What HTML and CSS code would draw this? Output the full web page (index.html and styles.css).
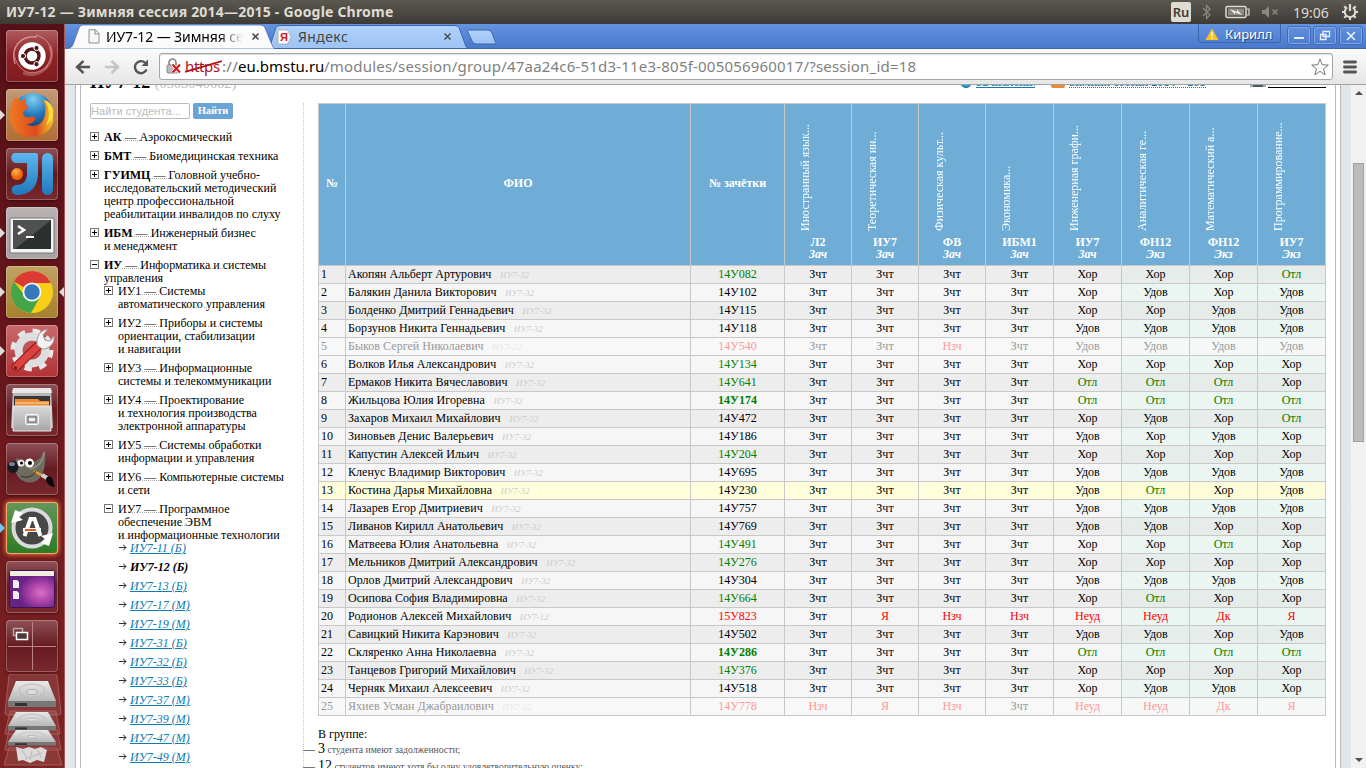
FILE: index.html
```html
<!DOCTYPE html>
<html lang="ru">
<head>
<meta charset="utf-8">
<title>ИУ7-12 — Зимняя сессия 2014—2015</title>
<link rel="stylesheet" href="styles.css">
</head>
<body>
<header class="panel">
  <span class="panel-title">ИУ7-12 — Зимняя сессия 2014—2015 - Google Chrome</span>
  <div class="indicators">
    <span class="lang">Ru</span>
    <svg class="i-bt" width="10" height="16" viewBox="0 0 10 16"><path d="M1 4l7 7-3.500 3.500v-13L8 5l-7 7" fill="none" stroke="#8b8880" stroke-width="1.200"/></svg>
    <svg class="i-bat" width="25" height="14" viewBox="0 0 25 14"><rect x="1" y="1.500" width="20" height="11" rx="1.500" fill="none" stroke="#dfdbd2" stroke-width="1.500"/><rect x="3" y="3.500" width="16" height="7" fill="#8d8a83"/><path d="M22 4h2v6h-2" fill="none" stroke="#dfdbd2" stroke-width="1.200"/><path d="M5 4l7 3v-2.500l5 5.500-7-2.500v2z" fill="#f2efe8"/></svg>
    <svg class="i-snd" width="18" height="14" viewBox="0 0 18 14"><path d="M1 5h3l4-4v12L4 9H1z" fill="#8b8880"/><path d="M11.500 4.500l5 5m0-5l-5 5" stroke="#8b8880" stroke-width="1.500"/></svg>
    <span class="clock">19:06</span>
    <svg class="i-gear" width="18" height="18" viewBox="0 0 18 18"><g stroke="#dfdbd2" stroke-width="2.200"><path d="M9 1v7M1 9h3M14 9h3M9 14v3M3.300 3.300l2.200 2.200M12.500 12.500l2.200 2.200M14.700 3.300l-2.200 2.200M5.500 12.500l-2.200 2.200"/></g><path d="M6.200 4.500a5.200 5.200 0 1 0 5.600 0" fill="none" stroke="#dfdbd2" stroke-width="2"/></svg>
  </div>
</header>
<div class="desktop">
<nav class="launcher">
  <div class="tile t-dash"><svg viewBox="0 0 52 52"><g fill="none" stroke="#f1c6c2" opacity=".6"><path d="M9 34C4 18 14 5 31 7" stroke-width="1.500"/><path d="M44 16C50 34 35 49 17 43" stroke-width="3" opacity=".5"/><path d="M30 5c18 5 20 24 8 34M8 24c4 20 20 24 34 12"/></g><circle cx="26" cy="26" r="13.700" fill="#fff"/><circle cx="26" cy="26" r="7" fill="none" stroke="#571319" stroke-width="3.400"/><g fill="#571319" stroke="#fff"><circle cx="17" cy="26" r="2.600"/><circle cx="30.500" cy="18" r="2.600"/><circle cx="30.500" cy="34.200" r="2.600"/></g></svg></div>
  <div class="tile t-ff run"><svg viewBox="0 0 52 52"><defs><radialGradient id="ffb" cx=".5" cy=".15" r=".8"><stop offset="0" stop-color="#7fd0f2"/><stop offset=".5" stop-color="#2579bd"/><stop offset="1" stop-color="#15305f"/></radialGradient><linearGradient id="ffo" x1="0" x2="1"><stop offset="0" stop-color="#ef7a22"/><stop offset=".6" stop-color="#dc4a1d"/><stop offset="1" stop-color="#f7c52c"/></linearGradient></defs><circle cx="27" cy="24" r="20" fill="url(#ffb)"/><path d="M7 12l3-4 5 4 5-3-1 6c3 1 4 3 2 5l-4 3c0 4 3 6 7 5 4-1 7 0 5 3-2 4-7 4-9 4 6 4 15 2 18-6 3-8 1-15-2-19 7 4 13 14 11 23-2 8-10 15-21 15C13 48 4 40 4 28c0-7 1-12 3-16z" fill="url(#ffo)"/><path d="M38 11c5 6 7 16 2 25 6-3 8-9 7-16-2-6-5-8-9-9z" fill="#fbdc3b"/></svg></div>
  <div class="tile t-dark"><svg viewBox="0 0 52 52"><defs><linearGradient id="ji" x1="0" y1="0" x2="0" y2="1"><stop offset="0" stop-color="#5cb8ee"/><stop offset="1" stop-color="#2077bd"/></linearGradient><radialGradient id="jo" cx=".4" cy=".3"><stop offset="0" stop-color="#ffb652"/><stop offset="1" stop-color="#ec6608"/></radialGradient></defs><path d="M8 5h22q2 0 2 3v17c0 13-7 22-21 22-7 0-7-9-1-10 8 0 11-4 11-12V15H11C4 15 4 7 8 5z" fill="url(#ji)"/><rect x="36" y="5" width="11" height="42" rx="5.500" fill="url(#ji)"/><circle cx="11" cy="26" r="6" fill="url(#jo)"/></svg></div>
  <div class="tile t-grey run"><svg viewBox="0 0 52 52"><path d="M4 11h44v35H4z" fill="#f4f4f4" stroke="#777"/><path d="M7 13h38v29H7z" fill="#2d2f2f"/><path d="M7 13h38L9 42H7z" fill="#4e5150"/><path d="M12 19l6 4-6 4" fill="none" stroke="#fff" stroke-width="2.500"/><path d="M20 30h8" stroke="#fff" stroke-width="2"/></svg></div>
  <div class="tile t-gold run active"><svg viewBox="0 0 52 52"><circle cx="26" cy="26" r="21" fill="#f8cf16"/><path d="M26 26L7.800 15.500A21 21 0 0 1 45 17H26z" fill="#dc3b35"/><path d="M7.800 15.500A21 21 0 0 0 25 47l9-16-8-5-7 4z" fill="#45a549"/><circle cx="26" cy="26" r="9.500" fill="#f5f5f5"/><circle cx="26" cy="26" r="7.700" fill="#3579bb"/></svg></div>
  <div class="tile t-red run"><svg viewBox="0 0 52 52"><circle cx="26" cy="25" r="18.500" fill="none" stroke="#e7e7e7" stroke-width="6" stroke-dasharray="7.200 7.330"/><circle cx="26" cy="25" r="13.500" fill="none" stroke="#dedede" stroke-width="8"/><path d="M10 42L36 17" stroke="#8e1717" stroke-width="9" stroke-linecap="round"/><path d="M10 42L31 22" stroke="#de4240" stroke-width="7" stroke-linecap="round"/><path d="M31 20c-1-8 3-15 11-16l-5 6 2 5 5 1 4-5c1 8-5 13-12 13z" fill="#f3f3f3" stroke="#999"/><circle cx="9.500" cy="43" r="1.700" fill="#721414"/></svg></div>
  <div class="tile t-dark"><svg viewBox="0 0 52 52"><defs><linearGradient id="fm" x1="0" y1="0" x2="0" y2="1"><stop offset="0" stop-color="#d9d9d9"/><stop offset="1" stop-color="#a6a6a6"/></linearGradient></defs><path d="M7 4h38l2 40H5z" fill="#b7b7b7"/><path d="M7 4h38l1 5H6z" fill="#e8e8e8"/><path d="M8 12h36v13H8z" fill="#373737"/><path d="M9 15h23l2 2h9v8H9z" fill="#eb8936"/><path d="M9 19h34" stroke="#fbe0a4"/><path d="M7 22h38v25H7z" fill="url(#fm)" stroke="#e8e8e8"/><rect x="19.500" y="30.500" width="13" height="10" rx="1.500" fill="#c8c8c8" stroke="#f8f8f8"/><rect x="22" y="33" width="8" height="5" fill="#eee" stroke="#555"/></svg></div>
  <div class="tile t-dark"><svg viewBox="0 0 52 52"><path d="M39 7c1 16-1 26-9 31-7 4-17 0-20-8-1-6-1-10 1-16 2 3 4 5 8 6 8 1 17-4 20-13z" fill="#6f6b61"/><path d="M38 9c0 8-6 16-14 17" fill="none" stroke="#908b7e" stroke-width="2"/><ellipse cx="7" cy="24" rx="5.500" ry="6" fill="#171a1f"/><ellipse cx="6" cy="21" rx="3" ry="2" fill="#778493"/><circle cx="15" cy="20" r="3.500" fill="#eee"/><circle cx="23.500" cy="20" r="4.500" fill="#fff"/><circle cx="15.500" cy="20" r="1.500"/><circle cx="24" cy="20" r="2"/><path d="M28 28l11 6" stroke="#ec9b2c" stroke-width="2.500"/><path d="M36 32l5 3" stroke="#c9d2d8" stroke-width="4"/><path d="M40 36c1-3 4-3 6-1 2 3 1 6 3 9-5 0-9-4-9-8z" fill="#0b0b0b"/><path d="M15 33c7 3 12 0 15-5" fill="none" stroke="#2e2b27"/></svg></div>
  <div class="tile t-green run-blue"><svg viewBox="0 0 52 52"><circle cx="26" cy="26" r="18.500" fill="#474747" stroke="#dadada" stroke-width="4"/><path d="M9 8L5 21l12-3-4-3 4-4zM43 44l4-13-12 3 4 3-4 4z" fill="#fff"/><path d="M18.500 34l6-17h4l6 17" fill="none" stroke="#fff" stroke-width="4"/><path d="M17 28h18" stroke="#fff" stroke-width="4"/><path d="M19 28h11" stroke="#ed5b21" stroke-width="2"/></svg></div>
  <div class="tile t-dark"><svg viewBox="0 0 52 52"><defs><radialGradient id="dp" cx=".7" cy=".6"><stop offset="0" stop-color="#dc6fc5"/><stop offset=".6" stop-color="#a03ca2"/><stop offset="1" stop-color="#682386"/></radialGradient></defs><rect x="3.500" y="9.500" width="45" height="37" rx="2" fill="url(#dp)" stroke="#3f1254"/><path d="M4 10h44v5H4z" fill="#f1eedd"/><path d="M7 19h4l2 2v6H7zM7 30h4l2 2v6H7z" fill="#eee"/></svg></div>
  <div class="tile t-dark"><svg viewBox="0 0 52 52"><path d="M26.500 2v48M2 26.500h48" stroke="#bb8585"/><path d="M7.500 8.500h9v7h-9z" fill="none" stroke="#aaa" stroke-width="1.500"/><path d="M10.500 12.500h11v7h-11z" fill="#4a3b3b" stroke="#fff" stroke-width="1.500"/></svg></div>
  <svg class="stack" width="60" height="94" viewBox="0 0 60 94">
    <defs><linearGradient id="hd" x1="0" y1="0" x2="0" y2="1"><stop offset="0" stop-color="#e9e9e9"/><stop offset="1" stop-color="#b7b7b7"/></linearGradient>
    <g id="drive"><path d="M12 0h32l8 20H4z" fill="url(#hd)"/><path d="M4 20h48v6H4z" fill="#777"/><path d="M11 22h12v3H11z" fill="#333"/><ellipse cx="28" cy="10" rx="13" ry="7" fill="none" stroke="#bbb"/><ellipse cx="28" cy="11" rx="5" ry="2.500" fill="#ddd" stroke="#999" stroke-width=".6"/></g></defs>
    <g fill="#fff" fill-opacity=".1" stroke="#a55b5b"><path d="M5 2q0-2 2-2h44q2 0 2 2l4 37q0 2-3 2H3q-2 0-2-2z"/><path d="M6 37h46l4 23H1zM5 56h48l4 20H1zM5 74h48l5 17H0z"/></g>
    <use href="#drive" x="0" y="7"/><use href="#drive" transform="translate(0 38) scale(1 .7)"/><use href="#drive" transform="translate(0 56) scale(1 .6)"/>
    <path d="M12 73l7 2 6-2 6 2 6-2 6 3-3 12-7-2-7 3-7-3-5 1z" fill="#dadada"/><path d="M18 76l5 8m5-7l-2 9m8-10l3 8m-16 1l17-6" stroke="#bbb" fill="none"/>
  </svg>
</nav>
<main class="browser">
  <div class="tabstrip">
    <svg class="tab-shapes" width="450" height="25" viewBox="0 0 450 25"><defs><linearGradient id="t2" x1="0" y1="0" x2="0" y2="1"><stop offset="0" stop-color="#b0d1fa"/><stop offset="1" stop-color="#9dc3f3"/></linearGradient></defs>
      <path d="M0 24.500H450" stroke="#3d66ad"/>
      <path d="M202 24.500c4-1 4-7 7-15l2-6q1-2 4-2H390q3 0 4 2l7 19q1 2 4 2z" fill="url(#t2)" stroke="#3d66ad"/>
      <path d="M403 6q-1 0 0 2l4 9q1 3 4 3h18q3 0 1-3l-3-8q-1-3-4-3z" fill="url(#t2)" stroke="#3d66ad"/>
      <path d="M0 25c7-1 7-2 9-7l5-14q1-3 4-3H195q4 0 5 3l7 17q1 3 3 4z" fill="#fbfbfb" stroke="#3d66ad" stroke-width=".7"/></svg>
    <div class="tab tab-on"><svg width="12" height="15" viewBox="0 0 12 15"><path d="M1 .7h6.500L11 4.500V14H1z" fill="#f7f7f7" stroke="#8e8e8e"/><path d="M7 .7V5h4" fill="none" stroke="#8e8e8e"/></svg><span class="tab-title">ИУ7-12 — Зимняя се</span><svg class="x" width="9" height="9" viewBox="0 0 9 9"><path d="M1.500 1.500l6 6m0-6l-6 6" stroke="#505050" stroke-width="1.600"/></svg></div>
    <div class="tab tab-off"><svg width="16" height="16" viewBox="0 0 16 16"><path d="M1 1h9.500L14 8l-3.500 7H1z" fill="#fff" stroke="#a2a2a2" stroke-width=".7"/><text x="3" y="12" class="ya">Я</text></svg><span class="tab-title">Яндекс</span><svg class="x" width="9" height="9" viewBox="0 0 9 9"><path d="M1.500 1.500l6 6m0-6l-6 6" stroke="#505050" stroke-width="1.600"/></svg></div>
    <div class="user"><svg width="14" height="13" viewBox="0 0 14 13"><path d="M7 .5L13.500 12H.5z" fill="#fbc11c"/><path d="M7 4v4.500M7 9.500v1.500" stroke="#fff" stroke-width="1.500"/></svg>Кирилл</div>
    <div class="winbtns">
      <span><svg width="12" height="12" viewBox="0 0 12 12"><path d="M1 8h10" stroke="#e8f0ff" stroke-width="2"/></svg></span>
      <span><svg width="12" height="12" viewBox="0 0 12 12"><path d="M4 1.500h6.500v5H4zM1.500 4.500h5.500v5H1.500z" fill="none" stroke="#e8f0ff" stroke-width="1.300"/></svg></span>
      <span><svg width="12" height="12" viewBox="0 0 12 12"><path d="M2 2l8 8m0-8l-8 8" stroke="#e8f0ff" stroke-width="1.700"/></svg></span>
    </div>
  </div>
  <div class="toolbar">
    <svg width="16" height="16" viewBox="0 0 16 16"><path d="M15 8H2.500M8.500 2L2 8l6.500 6" fill="none" stroke="#555" stroke-width="2.400"/></svg>
    <svg width="16" height="16" viewBox="0 0 16 16"><path d="M1 8h12.500M7.500 2L14 8l-6.500 6" fill="none" stroke="#c4c4c4" stroke-width="2.400"/></svg>
    <svg width="16" height="16" viewBox="0 0 16 16"><path d="M13.500 10.500A6 6 0 1 1 12 3.700" fill="none" stroke="#555" stroke-width="2.400"/><path d="M15 .5V7H8.500z" fill="#555"/></svg>
    <div class="omnibox">
      <svg width="15" height="17" viewBox="0 0 15 17"><path d="M3 8V4.500a3.500 3.500 0 0 1 7 0V8" fill="none" stroke="#888" stroke-width="1.700"/><rect x="1" y="7" width="11" height="8" rx="1" fill="#bdbdbd" stroke="#888"/><path d="M6.500 6.500l7.500 8m0-8l-7.500 8" stroke="#fff" stroke-width="3.400"/><path d="M6.500 6.500l7.500 8m0-8l-7.500 8" stroke="#d01818" stroke-width="2"/></svg>
      <span class="https">https<svg width="37" height="14" viewBox="0 0 37 14"><path d="M0 12L37 1" stroke="#b01116" stroke-width="1.700"/></svg></span><span class="sep">://</span><span class="host">eu.bmstu.ru</span><span class="path">/modules/session/group/47aa24c6-51d3-11e3-805f-005056960017/?session_id=18</span>
      <svg class="star" width="18" height="18" viewBox="0 0 18 18"><path d="M9 1l2.200 5.800 6.100.2-4.800 3.800 1.700 6L9 13.300l-5.200 3.500 1.700-6L.7 7l6.100-.2z" fill="#fff" stroke="#777" stroke-linejoin="round"/></svg>
    </div>
    <svg class="menu" width="14" height="14" viewBox="0 0 14 14"><path d="M1.500 2h11M1.500 7h11M1.500 12h11" stroke="#555" stroke-width="2.900" stroke-linecap="round"/></svg>
  </div>
  <div class="viewport">
    <div class="sheet"><div class="sheet-in">
      <div class="page-head">
        <h1>ИУ7-12 <span>(0503040062)</span></h1>
        <div class="tools">
          <a class="k1" href="#"><svg width="12" height="12" viewBox="0 0 12 12"><circle cx="6" cy="6" r="5.500" fill="#2d9bd0" stroke="#1b6f9c"/></svg><b>Зачисление</b></a>
          <a class="k2" href="#"><svg width="14" height="12" viewBox="0 0 14 12"><rect width="14" height="12" rx="2" fill="#ee8a2d"/></svg><b>Зимняя сессия 2014—2015</b></a>
          <a class="k3" href="#"><svg width="16" height="12" viewBox="0 0 16 12"><rect y="2" width="16" height="9" fill="#aaa"/><path d="M3 8h10v3H3z" fill="#4a5a60"/></svg><b>Печать</b></a>
        </div>
      </div>
      <div class="cols">
        <aside class="side">
          <div class="search"><span class="field">Найти студента...</span><span class="btn">Найти</span></div>
          <ul class="tree">
            <li><b>АК</b><u> — Аэрокосмический</u></li>
            <li><b>БМТ</b><u> — Биомедицинская техника</u></li>
            <li><b>ГУИМЦ</b><u> — Головной учебно-<br>исследовательский методический<br>центр профессиональной<br>реабилитации инвалидов по слуху</u></li>
            <li><b>ИБМ</b><u> — Инженерный бизнес<br>и менеджмент</u></li>
            <li class="open"><b>ИУ</b><u> — Информатика и системы<br>управления</u>
              <ul>
                <li><u>ИУ1 — Системы<br>автоматического управления</u></li>
                <li><u>ИУ2 — Приборы и системы<br>ориентации, стабилизации<br>и навигации</u></li>
                <li><u>ИУ3 — Информационные<br>системы и телекоммуникации</u></li>
                <li><u>ИУ4 — Проектирование<br>и технология производства<br>электронной аппаратуры</u></li>
                <li><u>ИУ5 — Системы обработки<br>информации и управления</u></li>
                <li><u>ИУ6 — Компьютерные системы<br>и сети</u></li>
                <li class="open"><u>ИУ7 — Программное<br>обеспечение ЭВМ<br>и информационные технологии</u>
                  <ol class="groups">
                    <li><a href="#">ИУ7-11 (Б)</a></li>
                    <li><strong>ИУ7-12 (Б)</strong></li>
                    <li><a href="#">ИУ7-13 (Б)</a></li>
                    <li><a href="#">ИУ7-17 (М)</a></li>
                    <li><a href="#">ИУ7-19 (М)</a></li>
                    <li><a href="#">ИУ7-31 (Б)</a></li>
                    <li><a href="#">ИУ7-32 (Б)</a></li>
                    <li><a href="#">ИУ7-33 (Б)</a></li>
                    <li><a href="#">ИУ7-37 (М)</a></li>
                    <li><a href="#">ИУ7-39 (М)</a></li>
                    <li><a href="#">ИУ7-47 (М)</a></li>
                    <li><a href="#">ИУ7-49 (М)</a></li>
                  </ol>
                </li>
              </ul>
            </li>
          </ul>
        </aside>
        <section class="content">
          <table class="marks">
            <colgroup><col class="c-n"><col class="c-fio"><col class="c-id"><col class="c-z"><col class="c-z"><col class="c-z"><col class="c-e"><col class="c-e"><col class="c-e"><col class="c-e"><col class="c-e"></colgroup>
            <thead><tr><th>№</th><th>ФИО</th><th>№ зачётки</th>
              <th class="subj"><span>Иностранный язык...</span>Л2<i>Зач</i></th>
              <th class="subj"><span>Теоретическая ин...</span>ИУ7<i>Зач</i></th>
              <th class="subj"><span>Физическая культ...</span>ФВ<i>Зач</i></th>
              <th class="subj"><span>Экономика...</span>ИБМ1<i>Зач</i></th>
              <th class="subj"><span>Инженерная графи...</span>ИУ7<i>Зач</i></th>
              <th class="subj"><span>Аналитическая ге...</span>ФН12<i>Экз</i></th>
              <th class="subj"><span>Математический а...</span>ФН12<i>Экз</i></th>
              <th class="subj"><span>Программирование...</span>ИУ7<i>Экз</i></th></tr></thead>
            <tbody>
<tr><td>1<td>Акопян Альберт Артурович<i>ИУ7-32</i><td class="g">14У082<td>Зчт<td>Зчт<td>Зчт<td>Зчт<td>Хор<td>Хор<td>Хор<td class="g">Отл</tr>
<tr><td>2<td>Балякин Данила Викторович<i>ИУ7-32</i><td>14У102<td>Зчт<td>Зчт<td>Зчт<td>Зчт<td>Хор<td>Удов<td>Хор<td>Удов</tr>
<tr><td>3<td>Болденко Дмитрий Геннадьевич<i>ИУ7-32</i><td>14У115<td>Зчт<td>Зчт<td>Зчт<td>Зчт<td>Хор<td>Хор<td>Удов<td>Удов</tr>
<tr><td>4<td>Борзунов Никита Геннадьевич<i>ИУ7-32</i><td>14У118<td>Зчт<td>Зчт<td>Зчт<td>Зчт<td>Удов<td>Удов<td>Удов<td>Удов</tr>
<tr class="out"><td>5<td>Быков Сергей Николаевич<i>ИУ7-22</i><td class="r">14У540<td>Зчт<td>Зчт<td class="r">Нзч<td>Зчт<td>Удов<td>Удов<td>Удов<td>Удов</tr>
<tr><td>6<td>Волков Илья Александрович<i>ИУ7-32</i><td class="g">14У134<td>Зчт<td>Зчт<td>Зчт<td>Зчт<td>Хор<td>Хор<td>Хор<td>Хор</tr>
<tr><td>7<td>Ермаков Никита Вячеславович<i>ИУ7-32</i><td class="g">14У641<td>Зчт<td>Зчт<td>Зчт<td>Зчт<td class="g">Отл<td class="g">Отл<td class="g">Отл<td>Хор</tr>
<tr><td>8<td>Жильцова Юлия Игоревна<i>ИУ7-32</i><td class="g top">14У174<td>Зчт<td>Зчт<td>Зчт<td>Зчт<td class="g">Отл<td class="g">Отл<td class="g">Отл<td class="g">Отл</tr>
<tr><td>9<td>Захаров Михаил Михайлович<i>ИУ7-32</i><td>14У472<td>Зчт<td>Зчт<td>Зчт<td>Зчт<td>Хор<td>Удов<td>Хор<td class="g">Отл</tr>
<tr><td>10<td>Зиновьев Денис Валерьевич<i>ИУ7-32</i><td>14У186<td>Зчт<td>Зчт<td>Зчт<td>Зчт<td>Удов<td>Хор<td>Удов<td>Хор</tr>
<tr><td>11<td>Капустин Алексей Ильич<i>ИУ7-32</i><td class="g">14У204<td>Зчт<td>Зчт<td>Зчт<td>Зчт<td>Хор<td>Хор<td>Хор<td>Хор</tr>
<tr><td>12<td>Кленус Владимир Викторович<i>ИУ7-32</i><td>14У695<td>Зчт<td>Зчт<td>Зчт<td>Зчт<td>Удов<td>Удов<td>Удов<td>Удов</tr>
<tr class="hover"><td>13<td>Костина Дарья Михайловна<i>ИУ7-32</i><td>14У230<td>Зчт<td>Зчт<td>Зчт<td>Зчт<td>Удов<td class="g">Отл<td>Хор<td>Удов</tr>
<tr><td>14<td>Лазарев Егор Дмитриевич<i>ИУ7-32</i><td>14У757<td>Зчт<td>Зчт<td>Зчт<td>Зчт<td>Удов<td>Удов<td>Удов<td>Удов</tr>
<tr><td>15<td>Ливанов Кирилл Анатольевич<i>ИУ7-32</i><td>14У769<td>Зчт<td>Зчт<td>Зчт<td>Зчт<td>Удов<td>Удов<td>Хор<td>Хор</tr>
<tr><td>16<td>Матвеева Юлия Анатольевна<i>ИУ7-32</i><td class="g">14У491<td>Зчт<td>Зчт<td>Зчт<td>Зчт<td>Хор<td>Хор<td class="g">Отл<td>Хор</tr>
<tr><td>17<td>Мельников Дмитрий Александрович<i>ИУ7-32</i><td class="g">14У276<td>Зчт<td>Зчт<td>Зчт<td>Зчт<td>Хор<td>Хор<td>Хор<td>Хор</tr>
<tr><td>18<td>Орлов Дмитрий Александрович<i>ИУ7-32</i><td>14У304<td>Зчт<td>Зчт<td>Зчт<td>Зчт<td>Удов<td>Удов<td>Удов<td>Удов</tr>
<tr><td>19<td>Осипова София Владимировна<i>ИУ7-32</i><td class="g">14У664<td>Зчт<td>Зчт<td>Зчт<td>Зчт<td>Хор<td class="g">Отл<td>Хор<td>Хор</tr>
<tr><td>20<td>Родионов Алексей Михайлович<i>ИУ7-12</i><td class="r">15У823<td>Зчт<td class="r">Я<td class="r">Нзч<td class="r">Нзч<td class="r">Неуд<td class="r">Неуд<td class="r">Дк<td class="r">Я</tr>
<tr><td>21<td>Савицкий Никита Карэнович<i>ИУ7-32</i><td>14У502<td>Зчт<td>Зчт<td>Зчт<td>Зчт<td>Удов<td>Удов<td>Хор<td>Удов</tr>
<tr><td>22<td>Скляренко Анна Николаевна<i>ИУ7-32</i><td class="g top">14У286<td>Зчт<td>Зчт<td>Зчт<td>Зчт<td class="g">Отл<td class="g">Отл<td class="g">Отл<td class="g">Отл</tr>
<tr><td>23<td>Танцевов Григорий Михайлович<i>ИУ7-32</i><td class="g">14У376<td>Зчт<td>Зчт<td>Зчт<td>Зчт<td>Хор<td>Хор<td>Хор<td>Хор</tr>
<tr><td>24<td>Черняк Михаил Алексеевич<i>ИУ7-32</i><td>14У518<td>Зчт<td>Зчт<td>Зчт<td>Зчт<td>Хор<td>Удов<td>Удов<td>Хор</tr>
<tr class="out"><td>25<td>Яхиев Усман Джабраилович<i>ИУ7-22</i><td class="r">14У778<td class="r">Нзч<td class="r">Я<td class="r">Нзч<td>Зчт<td class="r">Неуд<td class="r">Неуд<td class="r">Дк<td class="r">Я</tr>
            </tbody>
          </table>
          <p class="sum">В группе:</p>
          <ul class="stats"><li><b>3</b> студента имеют задолженности;</li><li><b>12</b> студентов имеют хотя бы одну удовлетворительную оценку;</li></ul>
        </section>
      </div>
    </div></div>
    <div class="scroll"><i class="up"></i><span class="thumb"></span><i class="down"></i></div>
  </div>
</main>
</div>
</body>
</html>
```
FILE: styles.css
```css
*, *::before, *::after { box-sizing: border-box; }
html, body { height: 100%; }
body { margin: 0; height: 768px; overflow: hidden; display: flex; flex-direction: column; font: 12px/13px "Liberation Serif", serif; color: #000; }
svg { display: block; flex: none; }
ul, ol { list-style: none; margin: 0; padding: 0; }

.panel { flex: none; height: 24px; display: flex; justify-content: space-between; align-items: center; padding: 0 7px 0 6px; background: linear-gradient(#5b5850, #3d3b37); color: #dfdbd2; font-family: "Noto Sans", "Open Sans", sans-serif; }
.panel-title { font-size: 14px; line-height: 20px; margin-top: -1px; font-weight: 700; letter-spacing: .2px; white-space: nowrap; }
.indicators { display: flex; align-items: center; }
.lang { width: 20px; height: 20px; border-radius: 2px; background: #dfdbd2; color: #3d3b37; font-size: 13px; line-height: 20px; font-weight: 600; text-align: center; margin-right: 11px; }
.i-bt { margin-right: 13px; }
.i-bat { margin-right: 11px; }
.i-snd { margin-right: 14px; }
.clock { width: 36px; font-size: 14px; margin-right: 12px; white-space: nowrap; }

.desktop { flex: 1; min-height: 0; display: flex; }
.launcher { flex: none; width: 65px; padding: 6px 0 0 6px; display: flex; flex-direction: column; gap: 7px; overflow: hidden; background: linear-gradient(#561017, #6a171c 50%, #7e2322); border-right: 1px solid #a85a55; }
.tile { position: relative; flex: none; width: 52px; height: 52px; border-radius: 4px; box-shadow: inset 0 0 0 1px rgba(255,255,255,.25), 0 1px 3px rgba(0,0,0,.4); }
.tile svg { width: 52px; height: 52px; }
.t-dash { background: linear-gradient(#ad5b5d, #8f2226 50%, #7f1c20); }
.t-ff { background: linear-gradient(#c39a78, #b06d33); }
.t-dark { background: linear-gradient(#8e5156, #651a20 50%, #78292d); }
.t-grey { background: linear-gradient(#b9b3b3, #a9a3a2); }
.t-gold { background: linear-gradient(#c0a264, #a5802d); }
.t-red { background: linear-gradient(#c9696a, #b23335); }
.t-green { background: linear-gradient(#659659, #2d7a25); box-shadow: inset 0 0 0 1px #f8a66c, 0 0 4px 1px #e9703a; }
.run::before, .run-blue::before, .active::after { content: ""; position: absolute; top: 21px; border: 5px solid transparent; }
.run::before { left: -6px; border-left-color: #ddd; border-right: 0; }
.run-blue::before { left: -6px; border-left-color: #74c7ec; border-right: 0; }
.active::after { right: -6px; border-right-color: #ddd; border-left: 0; }
.stack { margin: -5px 0 0 -2px; }

.browser { flex: 1; min-width: 0; display: flex; flex-direction: column; }
.tabstrip { position: relative; flex: none; height: 25px; display: flex; background: linear-gradient(#6493e0, #4a78cc); border-bottom: 1px solid #3d66ad; font-family: "Noto Sans", "Open Sans", sans-serif; }
.tab-shapes { position: absolute; left: 0; top: 0; }
.tab { position: relative; display: flex; align-items: center; font-size: 14px; white-space: nowrap; }
.tab-on { width: 203px; padding: 1px 8px 0 23px; }
.tab-off { width: 192px; padding: 1px 8px 0 9px; color: #444; }
.tab-title { flex: 1; overflow: hidden; line-height: 20px; letter-spacing: -.1px; }
.tab-on .tab-title { margin: 0 8px 0 6px; -webkit-mask-image: linear-gradient(90deg, #000 82%, transparent); mask-image: linear-gradient(90deg, #000 82%, transparent); }
.tab-off .tab-title { margin-left: 5px; letter-spacing: .4px; }
.ya { font: bold 11px "Liberation Sans", sans-serif; fill: #d81414; }
.user { margin-left: auto; width: 83px; height: 19px; padding: 2px 0 0 6px; display: flex; align-items: center; gap: 6px; border: 1px solid #3d66ad; border-top: 0; border-radius: 0 0 4px 4px; color: #fff; font-size: 13px; text-shadow: 1px 1px 1px #223f78; }
.winbtns { display: flex; gap: 4px; padding: 3px 4px 0 7px; }
.winbtns span { width: 22px; height: 17px; display: flex; align-items: center; justify-content: center; border: 1px solid #83a8e6; outline: 1px solid #416bb5; outline-offset: 0; border-radius: 2px; }
.toolbar { flex: none; height: 36px; display: flex; align-items: center; padding: 0 8px 0 10px; background: linear-gradient(#fbfbfb, #e6e6e6); border-bottom: 1px solid #a3a3a3; gap: 13px; font-family: "Noto Sans", "Open Sans", sans-serif; }
.omnibox { flex: 1; height: 27px; margin: 0 -3px 0 -3px; display: flex; align-items: center; padding: 0 3px 0 6px; background: #fff; border: 1px solid #a6a6a6; border-radius: 3px; font-size: 15px; line-height: 25px; white-space: nowrap; box-shadow: inset 0 1px 1px #ddd; }
.https { position: relative; margin-left: 4px; width: 37px; color: #b01116; letter-spacing: -.35px; }
.https svg { position: absolute; left: 0; top: 6px; }
.sep { width: 16px; color: #7a7a7a; letter-spacing: .3px; }
.host { width: 86px; letter-spacing: 0; }
.path { color: #7f7f7f; letter-spacing: .2px; }
.star { margin-left: auto; }
.menu { margin-right: 1px; }

.viewport { flex: 1; min-height: 0; display: flex; background: linear-gradient(90deg, #e9edef, #dfe4e9 10px, #dfe4e9 1276px, #e9ecef); overflow: hidden; }
.sheet { width: 1266px; margin-left: 10px; padding: 0 4px; background: #fff; border: solid #bbb; border-width: 0 1px; }
.sheet-in { height: 100%; overflow: hidden; padding: 0 9px; border: solid #bbb; border-width: 0 1px; }
.page-head { height: 18px; display: flex; justify-content: space-between; overflow: hidden; }
h1 { margin: -13px 0 0; font-size: 18px; line-height: 20px; font-weight: 700; white-space: nowrap; }
h1 span { font-size: 14.4px; font-weight: 400; color: #bbb; }
.tools { display: flex; margin-top: -9px; height: 14px; }
.tools a { display: flex; gap: 4px; color: #0e7bb1; text-decoration: none; white-space: nowrap; }
.tools b { height: 12px; font-size: 12px; line-height: 12px; overflow: hidden; }
.k1 { width: 91px; }
.k1 b { width: 59px; height: 12px; border-bottom: 1px solid #0e7bb1; }
.k2 { width: 199px; }
.k2 b { width: 137px; border-bottom: 1px dotted #0e7bb1; }
.tools .k3 { width: 76px; gap: 2px; color: #000; }
.k3 b { width: 58px; line-height: 9px; border-bottom: 1px solid #000; }
.cols { display: flex; }
.side { flex: none; width: 214px; height: 680px; overflow: hidden; border-right: 1px dotted #ccc; }
.search { display: flex; gap: 3px; height: 16px; }
.field { width: 100px; border: 1px solid #bbb; border-radius: 2px; color: #bbb; font: 11px/14px "Liberation Sans", sans-serif; letter-spacing: .05px; padding-left: 0; white-space: nowrap; }
.btn { width: 40px; border-radius: 2px; background: #6aa3d5; color: #fff; font: bold 10.5px/16px "Liberation Serif", serif; text-align: center; }
.tree { margin-top: 12px; }
.tree li { position: relative; padding-left: 14px; margin-bottom: 6px; white-space: nowrap; }
.tree > li::before, .tree ul > li::before { content: ""; position: absolute; left: 0; top: 1px; width: 9px; height: 9px; border: 1px solid #777; background: linear-gradient(#000, #000) center / 5px 1px no-repeat, linear-gradient(#000, #000) center / 1px 5px no-repeat; }
.tree li.open::before { background: linear-gradient(#000, #000) center / 5px 1px no-repeat; }
.tree u { text-decoration: underline dotted #aaa 1px; text-underline-offset: -1px; letter-spacing: .02px; }
.tree .groups li { padding-left: 12px; font-style: italic; }
.groups li::before { content: ""; position: absolute; left: 1px; top: 5px; width: 7px; height: 1px; background: #333; }
.groups li::after { content: ""; position: absolute; left: 3px; top: 3px; width: 5px; height: 5px; border: solid #333; border-width: 1px 1px 0 0; transform: rotate(45deg) scale(.85); }
.groups a { color: #0e7bb1; }
.content { flex: none; width: 1022px; padding-left: 14px; }
.marks { width: 1008px; table-layout: fixed; border-collapse: collapse; }
.c-n { width: 27px; } .c-fio { width: 345px; } .c-id { width: 94px; } .c-z { width: 67px; } .c-e { width: 68px; }
.marks th, .marks td { border: 1px solid #c8c8c8; padding: 0; white-space: nowrap; overflow: hidden; }
.marks th { height: 162px; padding-bottom: 4px; background: #6fadd6; color: #fff; line-height: 12px; text-align: center; }
.marks .subj { vertical-align: bottom; padding-bottom: 5px; }
.subj span { display: block; height: 120px; width: 14px; margin: 0 auto 5px 13px; writing-mode: vertical-rl; transform: rotate(180deg); line-height: 14px; font-weight: 400; text-align: left; }
.subj i { display: block; }
.marks td { height: 18px; padding-bottom: 1px; line-height: 16px; text-align: center; background: #f6f6f6; }
.marks tr:nth-child(odd) td { background: #ededed; }
.marks td:nth-child(n+9) { background: #ebf5f1; }
.marks tr:nth-child(odd) td:nth-child(n+9) { background: #e6ece9; }
.marks tr td:nth-child(1) { text-align: left; padding-left: 2px; }
.marks tr td:nth-child(2) { text-align: left; padding-left: 2px; letter-spacing: .04px; }
td i { margin-left: 8.5px; font-size: 9px; line-height: 1px; letter-spacing: 0; color: #ccc; }
.g { color: #008000; }
.r { color: #f00; }
.top { font-weight: 700; }
.marks tr.out td, .marks tr.out:nth-child(odd) td { background: #f8f8f8; color: #999; }
.marks tr.out:nth-child(odd) td:nth-child(n+9) { background: #f5f8f6; }
.marks tr.out:nth-child(odd) td.r { color: #f99; }
.out i { color: #e8e8e8; }
.marks tr.hover:nth-child(odd) td { background: #ffffdb; }
.marks tr.hover:nth-child(odd) td:nth-child(n+9) { background: #fcfcd8; }
.sum { margin: 12px 0 0; }
.stats { margin-left: -15px; color: #555; font-size: 9.7px; line-height: 16px; white-space: nowrap; }
.stats li::before { content: "— "; font-size: 12px; color: #000; }
.stats b { font-size: 14px; font-weight: 400; color: #000; }
.scroll { width: 15px; margin-left: auto; display: flex; flex-direction: column; align-items: center; background: #f1f1f1; }
.up, .down { border: 4px solid transparent; }
.up { margin-top: 2px; border-bottom-color: #505050; }
.down { margin-top: auto; margin-bottom: 2px; border-top-color: #505050; }
.thumb { width: 11px; height: 279px; margin-top: 68px; background: #bcbcbc; border: 1px solid #a0a0a0; }
```
